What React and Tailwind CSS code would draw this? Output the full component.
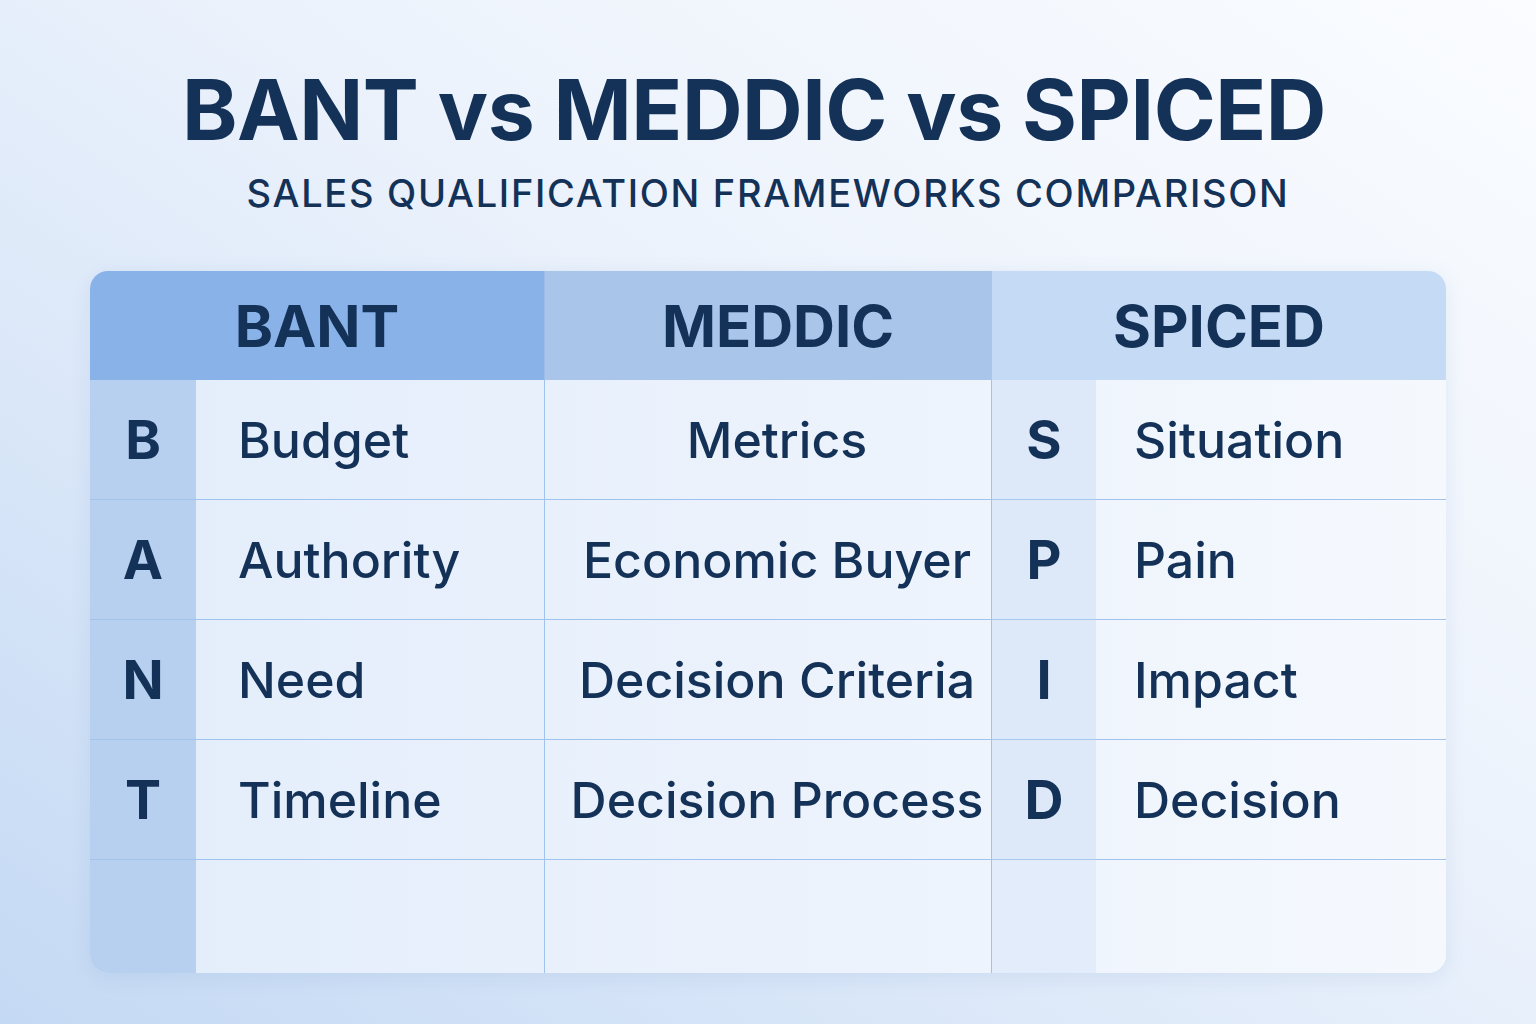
export default function App() {
  const rows = [
    { b: "B", bt: "Budget", m: "Metrics", s: "S", st: "Situation" },
    { b: "A", bt: "Authority", m: "Economic Buyer", s: "P", st: "Pain" },
    { b: "N", bt: "Need", m: "Decision Criteria", s: "I", st: "Impact" },
    { b: "T", bt: "Timeline", m: "Decision Process", s: "D", st: "Decision" },
  ];
  const font = { fontFamily: "Inter, 'Noto Sans', sans-serif" };
  return (
    <div
      className="w-[1536px] h-[1024px] overflow-hidden bg-[linear-gradient(35deg,#c4d9f4_0%,#dde9f9_35%,#edf3fc_60%,#fafcff_100%)] text-[#143157]"
      style={font}
    >
      <div className="flex flex-col items-center pt-[68px]">
        <h1 className="text-[84px] leading-none font-bold tracking-[-0.5px] pr-[28px]">
          BANT vs MEDDIC vs SPICED
        </h1>
        <p className="mt-[22px] text-[38px] leading-none font-medium tracking-[1.7px]">
          SALES QUALIFICATION FRAMEWORKS COMPARISON
        </p>
      </div>
      <div className="mt-[59px] ml-[90px] w-[1356px] h-[702px] rounded-[18px] overflow-hidden bg-[linear-gradient(90deg,#e3edfb_0%,#ebf2fc_50%,#f5f9fe_100%)] shadow-[0_4px_20px_rgba(80,120,180,0.12)] grid grid-cols-[106px_349px_447px_104px_350px] grid-rows-[109px_120px_120px_120px_120px_113px]">
        <div className="col-span-2 bg-[#88b2e8] flex items-center justify-center border-r border-[#9dbde8]">
          <span className="text-[58px] font-bold leading-none">BANT</span>
        </div>
        <div className="bg-[#a9c5e9] flex items-center justify-center border-r border-[#a8c6ee]">
          <span className="text-[58px] font-bold leading-none pl-[20px]">MEDDIC</span>
        </div>
        <div className="col-span-2 bg-[#c5daf5] flex items-center justify-center">
          <span className="text-[58px] font-bold leading-none">SPICED</span>
        </div>
        {rows.map((r, i) => (
          <Row key={i} r={r} />
        ))}
        <div className="bg-[#b7d0f0]" />
        <div className="border-r border-[#a0c2ee]" />
        <div className="border-r border-[#a0c2ee]" />
        <div className="bg-[#e2ecfa]" />
        <div />
      </div>
    </div>
  );
}

function Row({ r }) {
  return (
    <>
      <div className="bg-[#b7d0f0] border-b border-[#a3c3ec] flex items-center justify-center">
        <span className="text-[54px] font-bold leading-none">{r.b}</span>
      </div>
      <div className="border-b border-r border-[#a0c2ee] flex items-center pl-[42px]">
        <span className="text-[50px] font-medium leading-none">{r.bt}</span>
      </div>
      <div className="border-b border-r border-[#a0c2ee] flex items-center justify-center whitespace-nowrap">
        <span className="text-[50px] font-medium leading-none pl-[18px]">{r.m}</span>
      </div>
      <div className="bg-[#dde9f9] border-b border-[#a8c8f0] flex items-center justify-center">
        <span className="text-[54px] font-bold leading-none">{r.s}</span>
      </div>
      <div className="border-b border-[#a0c2ee] flex items-center pl-[38px]">
        <span className="text-[50px] font-medium leading-none">{r.st}</span>
      </div>
    </>
  );
}
